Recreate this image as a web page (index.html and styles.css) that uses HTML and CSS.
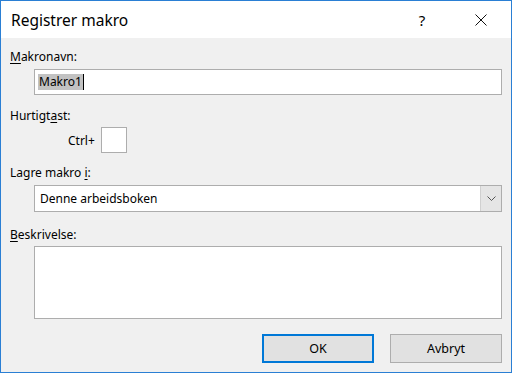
FILE: index.html
```html
<!DOCTYPE html>
<html>
	<head>
		<meta charset="utf-8">
		<title>Registrer makro</title>
		<link rel="stylesheet" href="styles.css">
	</head>
	<body>
		<div class="dialog">
			<div class="titlebar">
				<span class="title">Registrer makro</span>
				<span class="help">?</span>
				<span class="close">
					<svg width="12" height="12" viewBox="0 0 12 12"><path d="M0.5 0.5L11.5 11.5M11.5 0.5L0.5 11.5" stroke="#111" stroke-width="1" fill="none"/></svg>
				</span>
			</div>
			<div class="content">
				<div class="label"><u>M</u>akronavn:</div>
				<div class="field name">
					<span class="sel">Makro1</span><span class="caret"></span>
				</div>

				<div class="label gap">Hurtigt<u>a</u>st:</div>
				<div class="shortcut">
					<span>Ctrl+</span>
					<div class="keybox"></div>
				</div>

				<div class="label gap2">Lagre makro <u>i</u>:</div>
				<div class="field combo">
					<span class="value">Denne arbeidsboken</span>
					<span class="arrow">
						<svg width="9" height="5" viewBox="0 0 9 5"><path d="M0.5 0.5L4.5 4.5L8.5 0.5" stroke="#555" stroke-width="1" fill="none"/></svg>
					</span>
				</div>

				<div class="label gap3"><u>B</u>eskrivelse:</div>
				<div class="field memo"></div>

				<div class="buttons">
					<div class="btn default">OK</div>
					<div class="btn">Avbryt</div>
				</div>
			</div>
		</div>
	</body>
</html>
```

FILE: styles.css
```css
*{
	padding: 0;
	margin: 0;
	box-sizing: border-box;
}
body{
	font: 12px "Noto Sans", "Open Sans", sans-serif;
	color: #000;
	background: #f0f0f0;
}
.dialog{
	width: 512px;
	height: 373px;
	border: 1px solid #2a7fd4;
	background: #f0f0f0;
	display: flex;
	flex-direction: column;
}
.titlebar{
	height: 37px;
	background: #fff;
	display: flex;
	align-items: center;
	padding-left: 10px;
}
.title{
	flex: 1;
	font-size: 15.5px;
	color: #000;
}
.help{
	font-size: 15px;
	width: 30px;
	text-align: center;
	margin-right: 29px;
}
.close{
	width: 30px;
	height: 12px;
	display: flex;
	justify-content: center;
	margin-right: 15px;
}
.content{
	flex: 1;
	padding: 10px 9px 0 9px;
	display: flex;
	flex-direction: column;
}
.label{
	height: 18px;
	line-height: 18px;
}
.label u{
	text-decoration-thickness: 1px;
	text-underline-offset: 2px;
}
.field{
	margin-left: 24px;
	background: #fff;
	border: 1px solid #adadad;
}
.name{
	height: 26px;
	margin-top: 3px;
	display: flex;
	align-items: center;
	padding-left: 3px;
}
.sel{
	background: #c2c2c2;
	line-height: 16px;
	padding: 0 1px;
}
.caret{
	width: 1px;
	height: 16px;
	background: #000;
}
.gap{
	margin-top: 12px;
}
.shortcut{
	display: flex;
	align-items: center;
	margin-left: 58px;
	margin-top: 2px;
	gap: 6px;
}
.keybox{
	width: 26px;
	height: 26px;
	background: #fff;
	border: 1px solid #adadad;
}
.gap2{
	margin-top: 11px;
}
.combo{
	height: 27px;
	margin-top: 3px;
	display: flex;
	align-items: center;
	padding-left: 5px;
}
.value{
	flex: 1;
}
.arrow{
	width: 21px;
	height: 25px;
	background: #e5e5e5;
	border-left: 1px solid #d0d0d0;
	display: flex;
	align-items: center;
	justify-content: center;
}
.gap3{
	margin-top: 14px;
}
.memo{
	height: 73px;
	margin-top: 2px;
}
.buttons{
	display: flex;
	justify-content: flex-end;
	gap: 16px;
	margin-top: 15px;
}
.btn{
	width: 112px;
	height: 29px;
	background: #e1e1e1;
	border: 1px solid #adadad;
	display: flex;
	align-items: center;
	justify-content: center;
	font-size: 12.5px;
}
.btn.default{
	border: 2px solid #0078d7;
}
```
